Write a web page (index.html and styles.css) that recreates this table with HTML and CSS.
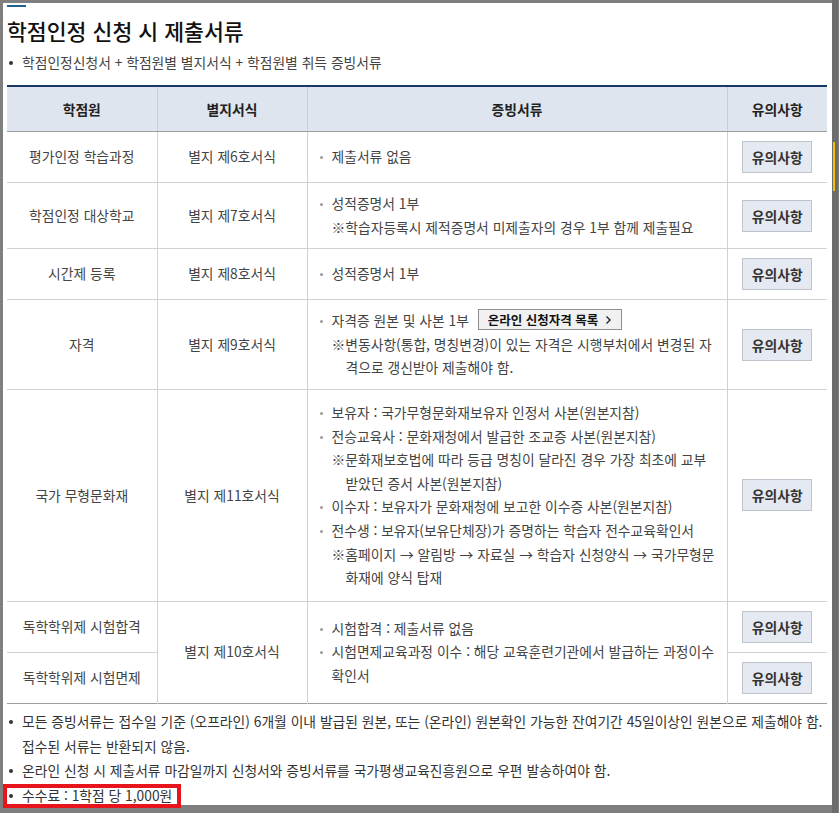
FILE: index.html
```html
<!DOCTYPE html>
<html lang="ko">
<head>
<meta charset="utf-8">
<title>학점인정 신청 시 제출서류</title>
<link rel="stylesheet" href="styles.css">
</head>
<body>
<div class="panel">
  <div class="accent"></div>
  <h2 class="title">학점인정 신청 시 제출서류</h2>
  <p class="lead">학점인정신청서 + 학점원별 별지서식 + 학점원별 취득 증빙서류</p>

  <table class="docs-table">
    <colgroup>
      <col class="c1"><col class="c2"><col class="c3"><col class="c4">
    </colgroup>
    <thead>
      <tr><th>학점원</th><th>별지서식</th><th>증빙서류</th><th>유의사항</th></tr>
    </thead>
    <tbody>
      <tr>
        <td class="center">평가인정 학습과정</td>
        <td class="center">별지 제6호서식</td>
        <td><ul class="docs"><li>제출서류 없음</li></ul></td>
        <td class="center"><button class="note-btn">유의사항</button></td>
      </tr>
      <tr>
        <td class="center">학점인정 대상학교</td>
        <td class="center">별지 제7호서식</td>
        <td><ul class="docs"><li>성적증명서 1부</li></ul><p class="ref">※학습자등록시 제적증명서 미제출자의 경우 1부 함께 제출필요</p></td>
        <td class="center"><button class="note-btn">유의사항</button></td>
      </tr>
      <tr>
        <td class="center">시간제 등록</td>
        <td class="center">별지 제8호서식</td>
        <td><ul class="docs"><li>성적증명서 1부</li></ul></td>
        <td class="center"><button class="note-btn">유의사항</button></td>
      </tr>
      <tr>
        <td class="center">자격</td>
        <td class="center">별지 제9호서식</td>
        <td><ul class="docs"><li>자격증 원본 및 사본 1부<button class="list-btn">온라인 신청자격 목록<svg class="chev" width="7" height="10" viewBox="0 0 7 10"><path d="M1.5 1.5 L5 5 L1.5 8.5" fill="none" stroke="#222" stroke-width="1.4"/></svg></button></li></ul><p class="ref">※변동사항(통합, 명칭변경)이 있는 자격은 시행부처에서 변경된 자<br>격으로 갱신받아 제출해야 함.</p></td>
        <td class="center"><button class="note-btn">유의사항</button></td>
      </tr>
      <tr>
        <td class="center">국가 무형문화재</td>
        <td class="center">별지 제11호서식</td>
        <td class="tall">
          <ul class="docs">
            <li>보유자 : 국가무형문화재보유자 인정서 사본(원본지참)</li>
            <li>전승교육사 : 문화재청에서 발급한 조교증 사본(원본지참)</li>
          </ul>
          <p class="ref">※문화재보호법에 따라 등급 명칭이 달라진 경우 가장 최초에 교부<br>받았던 증서 사본(원본지참)</p>
          <ul class="docs">
            <li>이수자 : 보유자가 문화재청에 보고한 이수증 사본(원본지참)</li>
            <li>전수생 : 보유자(보유단체장)가 증명하는 학습자 전수교육확인서</li>
          </ul>
          <p class="ref">※홈페이지 → 알림방 → 자료실 → 학습자 신청양식 → 국가무형문<br>화재에 양식 탑재</p>
        </td>
        <td class="center"><button class="note-btn">유의사항</button></td>
      </tr>
      <tr>
        <td class="center">독학학위제 시험합격</td>
        <td class="center" rowspan="2">별지 제10호서식</td>
        <td rowspan="2">
          <ul class="docs">
            <li>시험합격 : 제출서류 없음</li>
            <li>시험면제교육과정 이수 : 해당 교육훈련기관에서 발급하는 과정이수<br>확인서</li>
          </ul>
        </td>
        <td class="center small"><button class="note-btn">유의사항</button></td>
      </tr>
      <tr>
        <td class="center">독학학위제 시험면제</td>
        <td class="center small"><button class="note-btn">유의사항</button></td>
      </tr>
    </tbody>
  </table>

  <ul class="notes">
    <li>모든 증빙서류는 접수일 기준 (오프라인) 6개월 이내 발급된 원본, 또는 (온라인) 원본확인 가능한 잔여기간 45일이상인 원본으로 제출해야 함.<br>접수된 서류는 반환되지 않음.</li>
    <li>온라인 신청 시 제출서류 마감일까지 신청서와 증빙서류를 국가평생교육진흥원으로 우편 발송하여야 함.</li>
    <li>수수료 : 1학점 당 1,000원</li>
  </ul>
</div>
<div class="highlight"></div>
<div class="scroll-mark"></div>
</body>
</html>
```
FILE: styles.css
```css
html, body {
  margin: 0;
  padding: 0;
}
body {
  background: #7f7f7f;
  font-family: "Noto Sans CJK KR", "Noto Sans KR", "Noto Sans", sans-serif;
  color: #333;
  width: 839px;
  height: 813px;
  overflow: hidden;
  position: relative;
}
.panel {
  background: #fff;
  margin: 3px 0 0 3px;
  width: 829px;
  height: 802px;
  box-sizing: border-box;
  padding: 2px 5px 0 4px;
}
.accent {
  width: 19px;
  height: 2px;
  background: #22618f;
}
.title {
  margin: 10px 0 0 0;
  font-size: 21.6px;
  line-height: 28px;
  font-weight: 500;
  color: #111;
}
.lead {
  margin: 7px 0 0 0;
  font-size: 13.8px;
  line-height: 20px;
  color: #444;
  padding-left: 15px;
  position: relative;
}
.lead::before, .notes li::before {
  content: "";
  position: absolute;
  left: 2px;
  width: 4px;
  height: 4px;
  border-radius: 50%;
  background: #333;
}
.lead::before { top: 9px; }

.docs-table {
  margin-top: 13px;
  width: 820px;
  table-layout: fixed;
  border-collapse: collapse;
  border-top: 2px solid #1b3767;
  border-bottom: 1px solid #9c9c9c;
  font-size: 13.8px;
  color: #444;
}
.c1 { width: 150px; }
.c2 { width: 150px; }
.c3 { width: 420px; }
.c4 { width: 100px; }
.docs-table th {
  background: #dfe5ef;
  height: 44px;
  padding: 0;
  font-weight: 700;
  color: #222;
  border-left: 1px solid #c9ccd2;
  border-bottom: 1px solid #9c9c9c;
}
.docs-table th:first-child { border-left: none; }
.docs-table td {
  border-left: 1px solid #d2d2d2;
  border-top: 1px solid #d2d2d2;
  padding: 9px 10px;
  line-height: 23.6px;
  vertical-align: middle;
  white-space: nowrap;
}
.docs-table tbody tr:first-child td { border-top: none; }
.docs-table td:first-child { border-left: none; }
.docs-table td.center { text-align: center; }
.docs-table td.tall { padding-top: 11px; padding-bottom: 11px; }
.docs-table td.small { padding-top: 9px; padding-bottom: 9px; }

.docs, .notes {
  list-style: none;
  margin: 0;
  padding: 0;
}
.docs li {
  position: relative;
  padding-left: 14px;
}
.docs li::before {
  content: "";
  position: absolute;
  left: 2px;
  top: 11px;
  width: 3px;
  height: 3px;
  border-radius: 50%;
  background: #9a9a9a;
}
.ref {
  margin: 0;
  padding-left: 28px;
  text-indent: -14px;
}
.note-btn {
  width: 70px;
  height: 32px;
  background: #e5e9f1;
  border: 1px solid #bfc3cb;
  font-family: inherit;
  font-size: 13.8px;
  font-weight: 700;
  color: #333;
  padding: 0;
  vertical-align: middle;
  display: inline-block;
}
.list-btn {
  margin-left: 9px;
  height: 21px;
  padding: 0 9px 0 9px;
  background: #f1f1f1;
  border: 1px solid #8f8f8f;
  font-family: inherit;
  font-size: 12.5px;
  font-weight: 700;
  color: #111;
  vertical-align: 1px;
  display: inline-flex;
  align-items: center;
  gap: 7px;
  line-height: 19px;
}
.chev { display: block; }

.notes {
  margin-top: 5px;
  font-size: 13.8px;
  line-height: 24.8px;
  color: #333;
}
.notes li {
  position: relative;
  padding-left: 15px;
  white-space: nowrap;
}
.notes li::before { top: 11px; }

.highlight {
  position: absolute;
  left: 3px;
  top: 784px;
  width: 178px;
  height: 24px;
  box-sizing: border-box;
  border: 4px solid #e8141c;
}
.scroll-mark {
  position: absolute;
  left: 832px;
  top: 0;
  width: 6px;
  height: 813px;
  background: #6c6c6c;
}
.scroll-mark::before {
  content: "";
  position: absolute;
  left: 1px;
  top: 142px;
  width: 2px;
  height: 49px;
  background: #f2c200;
}
```
